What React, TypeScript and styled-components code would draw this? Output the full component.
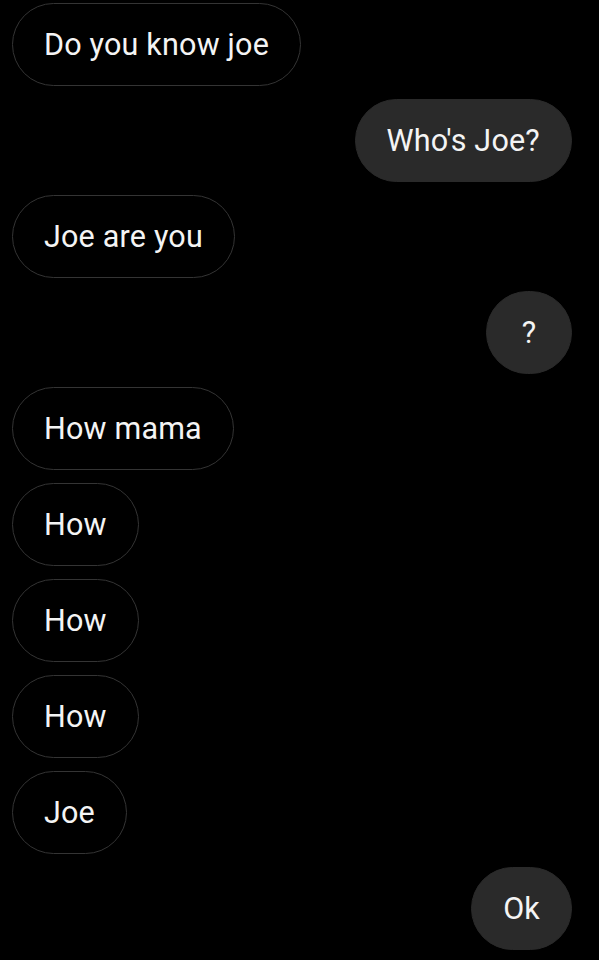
import React from "react";
import styled, { createGlobalStyle } from "styled-components";

const Global = createGlobalStyle`
  html, body { margin: 0; padding: 0; background: #000; }
  body { font-family: Roboto, "Noto Sans", sans-serif; }
`;

const Thread = styled.div`
  display: flex;
  flex-direction: column;
  gap: 13px;
  padding: 3px 27px 0 12px;
  min-height: 960px;
  box-sizing: border-box;
  background: #000;
`;

const Row = styled.div<{ $mine?: boolean }>`
  display: flex;
  justify-content: ${(p) => (p.$mine ? "flex-end" : "flex-start")};
`;

const Bubble = styled.div<{ $mine?: boolean }>`
  box-sizing: border-box;
  height: 83px;
  min-width: 86px;
  padding: 0 31px;
  display: flex;
  align-items: center;
  justify-content: center;
  border-radius: 42px;
  font-size: 30.5px;
  letter-spacing: 0.2px;
  color: #f4f4f4;
  white-space: nowrap;
  background: ${(p) => (p.$mine ? "#2a2a2a" : "#000")};
  border: 1.5px solid ${(p) => (p.$mine ? "#2a2a2a" : "#343434")};
`;

const messages: { text: string; mine?: boolean }[] = [
  { text: "Do you know joe" },
  { text: "Who's Joe?", mine: true },
  { text: "Joe are you" },
  { text: "?", mine: true },
  { text: "How mama" },
  { text: "How" },
  { text: "How" },
  { text: "How" },
  { text: "Joe" },
  { text: "Ok", mine: true },
];

export default function App() {
  return (
    <>
      <Global />
      <Thread>
        {messages.map((m, i) => (
          <Row key={i} $mine={m.mine}>
            <Bubble $mine={m.mine}>{m.text}</Bubble>
          </Row>
        ))}
      </Thread>
    </>
  );
}
